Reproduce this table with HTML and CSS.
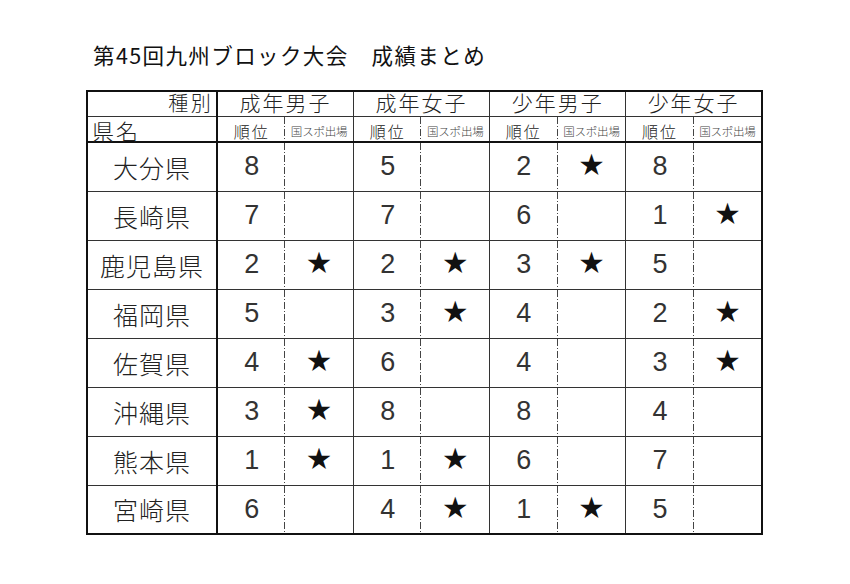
FILE: index.html
```html
<!DOCTYPE html>
<html lang="ja">
<head>
<meta charset="utf-8">
<link rel="stylesheet" href="styles.css">
</head>
<body>
<div class="page">
  <h1 class="title">第45回九州ブロック大会　成績まとめ</h1>
  <table class="results">
    <colgroup>
      <col class="c-name">
      <col class="c-rank"><col class="c-star">
      <col class="c-rank"><col class="c-star">
      <col class="c-rank"><col class="c-star">
      <col class="c-rank"><col class="c-star">
    </colgroup>
    <thead>
      <tr class="h1">
        <th class="kind">種別</th>
        <th colspan="2" class="grp">成年男子</th>
        <th colspan="2" class="grp">成年女子</th>
        <th colspan="2" class="grp">少年男子</th>
        <th colspan="2" class="grp">少年女子</th>
      </tr>
      <tr class="h2">
        <th class="pref">県名</th>
        <th class="rank">順位</th><th class="star small">国スポ出場</th>
        <th class="rank">順位</th><th class="star small">国スポ出場</th>
        <th class="rank">順位</th><th class="star small">国スポ出場</th>
        <th class="rank">順位</th><th class="star small">国スポ出場</th>
      </tr>
    </thead>
    <tbody>
      <tr><th class="name">大分県</th><td class="rank">8</td><td class="star"></td><td class="rank">5</td><td class="star"></td><td class="rank">2</td><td class="star">★</td><td class="rank">8</td><td class="star"></td></tr>
      <tr><th class="name">長崎県</th><td class="rank">7</td><td class="star"></td><td class="rank">7</td><td class="star"></td><td class="rank">6</td><td class="star"></td><td class="rank">1</td><td class="star">★</td></tr>
      <tr><th class="name">鹿児島県</th><td class="rank">2</td><td class="star">★</td><td class="rank">2</td><td class="star">★</td><td class="rank">3</td><td class="star">★</td><td class="rank">5</td><td class="star"></td></tr>
      <tr><th class="name">福岡県</th><td class="rank">5</td><td class="star"></td><td class="rank">3</td><td class="star">★</td><td class="rank">4</td><td class="star"></td><td class="rank">2</td><td class="star">★</td></tr>
      <tr><th class="name">佐賀県</th><td class="rank">4</td><td class="star">★</td><td class="rank">6</td><td class="star"></td><td class="rank">4</td><td class="star"></td><td class="rank">3</td><td class="star">★</td></tr>
      <tr><th class="name">沖縄県</th><td class="rank">3</td><td class="star">★</td><td class="rank">8</td><td class="star"></td><td class="rank">8</td><td class="star"></td><td class="rank">4</td><td class="star"></td></tr>
      <tr><th class="name">熊本県</th><td class="rank">1</td><td class="star">★</td><td class="rank">1</td><td class="star">★</td><td class="rank">6</td><td class="star"></td><td class="rank">7</td><td class="star"></td></tr>
      <tr><th class="name">宮崎県</th><td class="rank">6</td><td class="star"></td><td class="rank">4</td><td class="star">★</td><td class="rank">1</td><td class="star">★</td><td class="rank">5</td><td class="star"></td></tr>
    </tbody>
  </table>
</div>
</body>
</html>
```

FILE: styles.css
```css
html, body {
  margin: 0;
  padding: 0;
  background: #ffffff;
}

.page {
  padding: 41px 0 0 86px;
  font-family: "Noto Sans CJK JP", "Noto Sans", "DejaVu Sans", sans-serif;
  color: #222;
}

.title {
  margin: 0 0 21px 7px;
  font-size: 21.5px;
  font-weight: 400;
  line-height: 28px;
  letter-spacing: 1.4px;
  color: #111;
}

.results {
  border-collapse: collapse;
  table-layout: fixed;
  width: 677px;
  border: 2px solid #111;
}

.c-name { width: 130px; }
.c-rank { width: 68px; }
.c-star { width: 68px; }

.results th,
.results td {
  padding: 0;
  font-weight: 300;
  text-align: center;
  vertical-align: middle;
  border: 1px solid #333;
  overflow: visible;
  white-space: nowrap;
}

.h1 {
  height: 25px;
}

.h1 th {
  font-size: 21px;
  line-height: 21px;
  letter-spacing: 2px;
  padding-bottom: 3px;
  color: #222;
}

.h1 .kind {
  text-align: right;
  padding-right: 3px;
  font-size: 20px;
  letter-spacing: 2.5px;
}

.h2 {
  height: 25px;
}

.h2 th {
  font-size: 16px;
  line-height: 16px;
  letter-spacing: 2px;
  padding-top: 3px;
  border-bottom: 2px solid #111;
}

.h2 .pref {
  text-align: left;
  padding-left: 4px;
  padding-top: 2px;
  font-size: 22px;
  line-height: 22px;
  letter-spacing: 2px;
}

.h2 .small {
  font-size: 11.5px;
  line-height: 12px;
  color: #444;
  letter-spacing: -0.2px;
}

.results .kind,
.results .pref,
.results .name {
  border-right: 2px solid #111;
}

.results .rank {
  border-right: none;
  background-image: repeating-linear-gradient(to bottom, #444 0 7px, transparent 7px 9px, #444 9px 10px, transparent 10px 12px);
  background-size: 1px 100%;
  background-position: right top;
  background-repeat: no-repeat;
}

.results .star {
  border-left: none;
}

tbody tr {
  height: 49px;
}

tbody .name {
  font-size: 25px;
  letter-spacing: 1px;
  color: #222;
}

tbody .rank {
  font-size: 27px;
  font-family: "Liberation Sans", "Noto Sans", sans-serif;
  font-weight: 400;
  color: #333;
}

tbody .star {
  font-size: 24px;
  line-height: 24px;
  font-weight: 400;
  padding-bottom: 7px;
  color: #111;
  font-family: "Noto Sans CJK JP", "DejaVu Sans", sans-serif;
}
```
